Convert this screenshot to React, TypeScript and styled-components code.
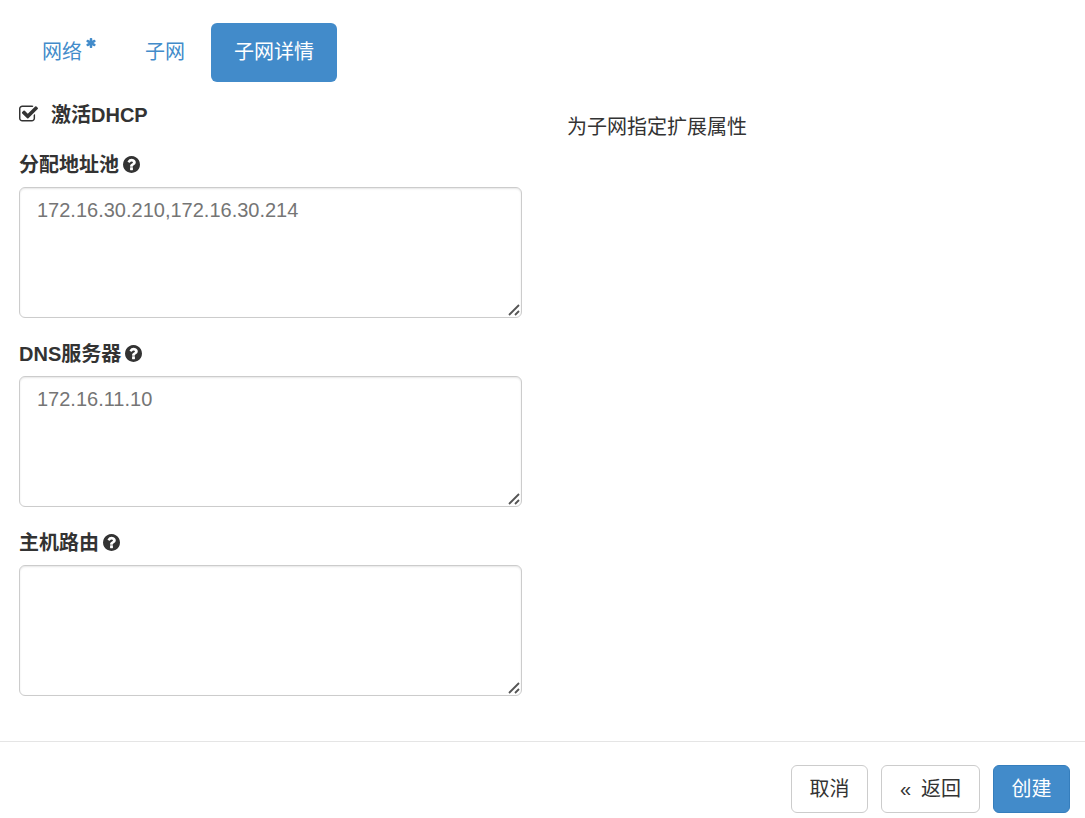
import React from "react";
import styled, { createGlobalStyle, css } from "styled-components";

const GlobalStyle = createGlobalStyle`
  *, *::before, *::after { box-sizing: border-box; }
  body {
    margin: 0;
    background: #fff;
    color: #333;
    font-family: "Liberation Sans", "Noto Sans CJK SC", sans-serif;
    font-size: 20px;
    line-height: 28px;
  }
`;

const BLUE = "#428bca";

const Dialog = styled.form`
  display: flex;
  flex-direction: column;
`;

const Tabs = styled.nav`
  display: flex;
  gap: 3px;
  padding: 23px 19px 0;
`;

const Tab = styled.a<{ $active?: boolean }>`
  display: flex;
  gap: 4px;
  padding: 15px 23px 16px;
  border-radius: 6px;
  color: ${(p) => (p.$active ? "#fff" : BLUE)};
  background: ${(p) => (p.$active ? BLUE : "transparent")};
  text-decoration: none;
`;

const RequiredMark = styled.svg`
  width: 10px;
  height: 10px;
  fill: currentColor;
`;

const Body = styled.div`
  display: grid;
  grid-template-columns: 1fr 1fr;
  column-gap: 45px;
  padding: 19px 15px 45px 19px;
`;

const Fields = styled.div`
  display: flex;
  flex-direction: column;
  gap: 22px;
`;

const CheckRow = styled.label`
  display: flex;
  align-items: center;
  gap: 13px;
  font-weight: bold;
`;

const CheckBox = styled.span`
  display: grid;
  align-items: start;
  width: 19px;
  height: 20px;
  > * { grid-area: 1 / 1; }
`;

const CheckInput = styled.input`
  appearance: none;
  width: 19px;
  height: 17px;
  margin: 0;
  &:not(:checked) + svg path:last-child { display: none; }
`;

const CheckIcon = styled.svg`
  width: 19px;
  height: 17px;
  fill: currentColor;
  pointer-events: none;
`;

const Field = styled.div`
  display: flex;
  flex-direction: column;
  gap: 8px;
`;

const FieldLabel = styled.label`
  display: flex;
  align-items: center;
  gap: 4px;
  font-weight: bold;
`;

const HelpIcon = styled.svg`
  width: 17px;
  height: 17px;
  margin-bottom: 2px;
  fill: currentColor;
`;

const TextAreaBox = styled.div`
  position: relative;
`;

const TextArea = styled.textarea`
  display: block;
  width: 100%;
  height: 131px;
  padding: 8px 17px;
  border: 1px solid #ccc;
  border-radius: 6px;
  box-shadow: inset 0 1px 2px rgba(0, 0, 0, 0.1);
  background: #fff;
  color: #757575;
  font: inherit;
  resize: vertical;
  &::-webkit-resizer { background: transparent; }
`;

const Grip = styled.svg`
  position: absolute;
  right: 2px;
  bottom: 2px;
  width: 12px;
  height: 12px;
  fill: none;
  stroke: #555;
  stroke-width: 1.8;
  pointer-events: none;
`;

const Description = styled.p`
  margin: 12px 0 0;
`;

const Footer = styled.footer`
  display: flex;
  justify-content: flex-end;
  gap: 13px;
  padding: 23px 15px 5px;
  border-top: 1px solid #e5e5e5;
`;

const Button = styled.button<{ $primary?: boolean; $wide?: boolean }>`
  display: flex;
  justify-content: center;
  gap: 10px;
  min-width: ${(p) => (p.$wide ? "99px" : "77px")};
  padding: 9px 17px;
  border: 1px solid #ccc;
  border-radius: 6px;
  background: #fff;
  color: #333;
  font: inherit;
  ${(p) =>
    p.$primary &&
    css`
      border-color: #357ebd;
      background: ${BLUE};
      color: #fff;
    `}
`;

const fields = [
  { id: "pools", label: "分配地址池", value: "172.16.30.210,172.16.30.214" },
  { id: "dns", label: "DNS服务器", value: "172.16.11.10" },
  { id: "routes", label: "主机路由", value: "" },
];

export default function App() {
  return (
    <>
      <GlobalStyle />
      <Dialog onSubmit={(e) => e.preventDefault()}>
        <Tabs>
          <Tab href="#network">
            网络
            <RequiredMark viewBox="160 128 1472 1536" aria-hidden="true">
              <path d="M1546 1050q46 26 59.5 77.5t-12.5 97.5l-64 110q-26 46-77.5 59.5t-97.5-12.5l-266-153v307q0 52-38 90t-90 38h-128q-52 0-90-38t-38-90v-307l-266 153q-46 26-97.5 12.5t-77.5-59.5l-64-110q-26-46-12.5-97.5t59.5-77.5l266-154-266-154q-46-26-59.5-77.5t12.5-97.5l64-110q26-46 77.5-59.5t97.5 12.5l266 153v-307q0-52 38-90t90-38h128q52 0 90 38t38 90v307l266-153q46-26 97.5-12.5t77.5 59.5l64 110q26 46 12.5 97.5t-59.5 77.5l-266 154z" />
            </RequiredMark>
          </Tab>
          <Tab href="#subnet">子网</Tab>
          <Tab href="#detail" $active aria-current="page">子网详情</Tab>
        </Tabs>
        <Body>
          <Fields>
            <CheckRow>
              <CheckBox>
                <CheckInput type="checkbox" defaultChecked />
                <CheckIcon viewBox="64 128 1664 1408" aria-hidden="true">
                  <path d="M1472 930v318q0 119-84.5 203.5t-203.5 84.5h-832q-119 0-203.5-84.5t-84.5-203.5v-832q0-119 84.5-203.5t203.5-84.5h832q63 0 117 25 15 7 18 23 3 17-9 29l-49 49q-10 10-23 10-3 0-9-2-23-6-45-6h-832q-66 0-113 47t-47 113v832q0 66 47 113t113 47h832q66 0 113-47t47-113v-254q0-13 9-22l64-64q10-10 23-10 6 0 12 3 20 8 20 29z" />
                  <path d="M1703 441l-814 814q-24 24-57 24t-57-24l-430-430q-24-24-24-57t24-57l110-110q24-24 57-24t57 24l263 263 647-647q24-24 57-24t57 24l110 110q24 24 24 57t-24 57z" />
                </CheckIcon>
              </CheckBox>
              激活DHCP
            </CheckRow>
            {fields.map((f) => (
              <Field key={f.id}>
                <FieldLabel htmlFor={f.id}>
                  {f.label}
                  <HelpIcon viewBox="128 128 1536 1536" aria-hidden="true">
                    <path d="M1024 1376v-192q0-14-9-23t-23-9h-192q-14 0-23 9t-9 23v192q0 14 9 23t23 9h192q14 0 23-9t9-23zm256-672q0-88-55.5-163t-138.5-116-170-41q-243 0-371 213-15 24 8 42l132 100q7 6 19 6 16 0 25-12 53-68 86-92 34-24 86-24 48 0 85.5 26t37.5 59q0 38-20 61t-68 45q-63 28-115.5 86.5t-52.5 125.5v36q0 14 9 23t23 9h192q14 0 23-9t9-23q0-19 21.5-49.5t54.5-49.5q32-18 49-28.5t46-35 44.5-48 28-60.5 12.5-81zm384 192q0 209-103 385.5t-279.5 279.5-385.5 103-385.5-103-279.5-279.5-103-385.5 103-385.5 279.5-279.5 385.5-103 385.5 103 279.5 279.5 103 385.5z" />
                  </HelpIcon>
                </FieldLabel>
                <TextAreaBox>
                  <TextArea id={f.id} defaultValue={f.value} />
                  <Grip viewBox="0 0 12 12" aria-hidden="true">
                    <path d="M1 11L11 1M7 11L11 7" />
                  </Grip>
                </TextAreaBox>
              </Field>
            ))}
          </Fields>
          <Description>为子网指定扩展属性</Description>
        </Body>
        <Footer>
          <Button type="button">取消</Button>
          <Button type="button" $wide>
            <span>«</span>
            <span>返回</span>
          </Button>
          <Button type="submit" $primary>创建</Button>
        </Footer>
      </Dialog>
    </>
  );
}
